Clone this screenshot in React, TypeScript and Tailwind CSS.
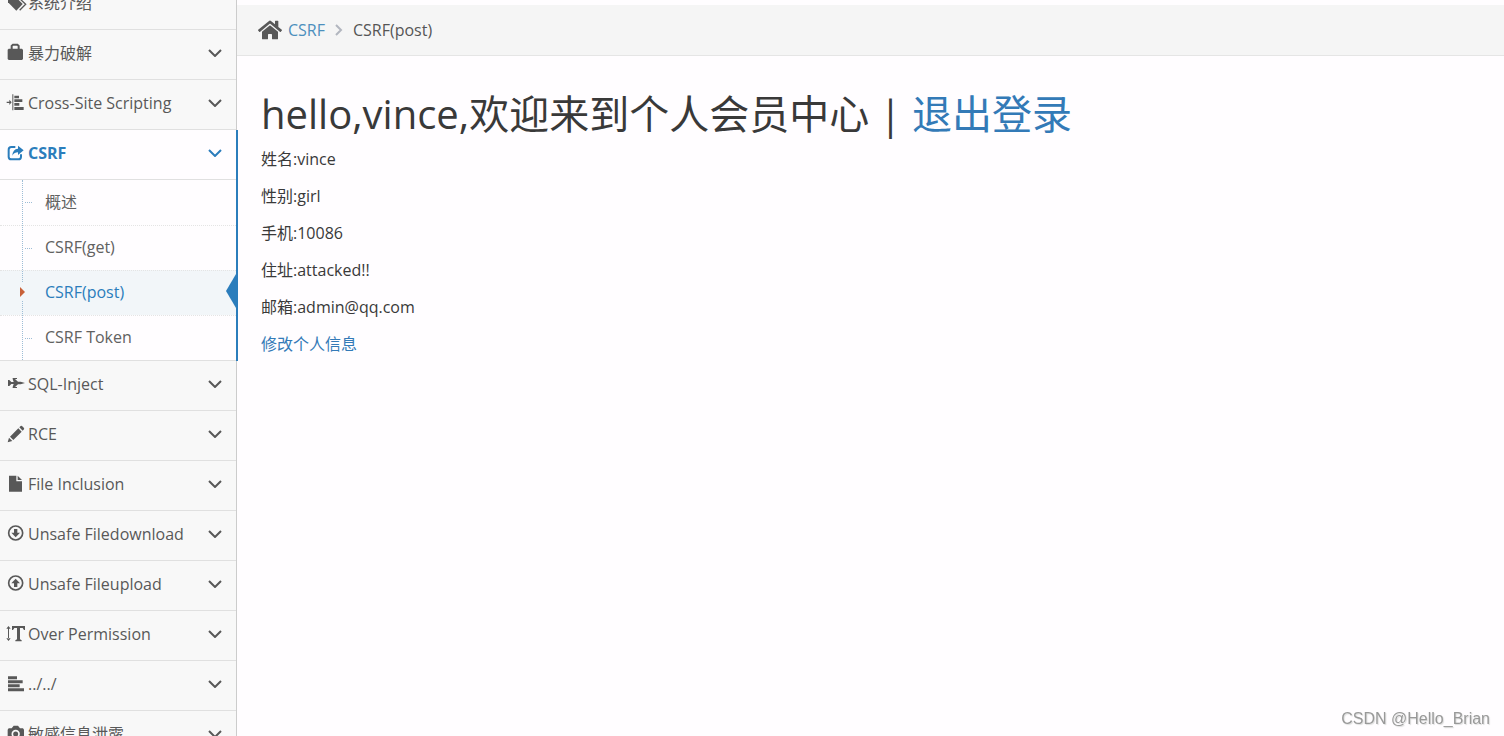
import React, { useState } from 'react';
import { FaHome } from 'react-icons/fa';

const icons: Record<string, React.ReactNode> = {
  tags: (
    <>
      <path d="M6 8h19l25 25-19 20L6 28z" fill="currentColor" />
      <circle cx="14" cy="16" r="4" fill="#f8f8f8" />
      <path d="M32 8l27 26-18 18" fill="none" stroke="currentColor" strokeWidth="4" />
    </>
  ),
  lock: (
    <>
      <path d="M8 17h40l3 3v28l-3 3H8l-3-3V20z" fill="currentColor" />
      <path d="M17 18v-9l4-4h13l4 4v9" fill="none" stroke="currentColor" strokeWidth="6" />
    </>
  ),
  alignObject: (
    <>
      <path d="M19 4h3v48h-3zM25 8h14v8H25zM25 19h24v8H25zM25 30h15v8H25zM25 42h28v9H25z" fill="currentColor" />
      <path d="M2 26h8v-6l7 8-7 8v-6H2z" fill="currentColor" />
    </>
  ),
  share: (
    <>
      <path d="M28 12H16q-8 0-8 8v21q0 8 8 8h21q8 0 8-8v-7" fill="none" stroke="currentColor" strokeWidth="6" />
      <path d="M36 8l17 14-17 14v-8q-11 0-17 10 1-20 17-21z" fill="currentColor" />
    </>
  ),
  plane: (
    <path d="M6 18h4l6 6h7l-3-9v-3h13v3h-6l9 8h8l13 4-13 4h-8l-9 8h6v3H20v-3l3-9h-7l-6 6H6z" fill="currentColor" />
  ),
  pencil: (
    <path d="M5 55l4-14 10 10zM12 38l25-25 10 10-25 25zM40 10l4-4q2-1 4 0l6 6q1 2 0 4l-4 4z" fill="currentColor" />
  ),
  file: <path d="M9 5h22v17h17v31H9zM35 5l13 13H35z" fill="currentColor" />,
  download: (
    <>
      <circle cx="29" cy="27" r="21" fill="none" stroke="currentColor" strokeWidth="5" />
      <path d="M24 15h10v11h8L29 40 16 26h8z" fill="currentColor" />
    </>
  ),
  upload: (
    <>
      <circle cx="29" cy="27" r="21" fill="none" stroke="currentColor" strokeWidth="5" />
      <path d="M24 39h10V28h8L29 14 16 28h8z" fill="currentColor" />
    </>
  ),
  textHeight: (
    <>
      <path d="M18 6h39v12h-3l-4-6h-8v34l5 3v3H28v-3l5-3V12h-8l-4 6h-3z" fill="currentColor" />
      <path d="M6 12h3v32H6zM1 14l6.500-8 6.500 8zM1 43l6.500 8 6.500-8z" fill="currentColor" />
    </>
  ),
  alignLeft: (
    <path d="M6 7h27v9H6zM6 19h44v9H6zM6 31h35v9H6zM6 43h48v9H6z" fill="currentColor" />
  ),
  camera: (
    <>
      <path d="M5 17l3-4h9l6-8h13l6 8h9l3 4v30l-3 3H8l-3-3z" fill="currentColor" />
      <circle cx="29" cy="30" r="10" fill="none" stroke="#f8f8f8" strokeWidth="5" />
    </>
  ),
};

type MenuItem = {
  icon: string;
  label: string;
  plain?: boolean;
  children?: string[];
};

const menu: MenuItem[] = [
  { icon: 'tags', label: '系统介绍', plain: true },
  { icon: 'lock', label: '暴力破解' },
  { icon: 'alignObject', label: 'Cross-Site Scripting' },
  { icon: 'share', label: 'CSRF', children: ['概述', 'CSRF(get)', 'CSRF(post)', 'CSRF Token'] },
  { icon: 'plane', label: 'SQL-Inject' },
  { icon: 'pencil', label: 'RCE' },
  { icon: 'file', label: 'File Inclusion' },
  { icon: 'download', label: 'Unsafe Filedownload' },
  { icon: 'upload', label: 'Unsafe Fileupload' },
  { icon: 'textHeight', label: 'Over Permission' },
  { icon: 'alignLeft', label: '../../' },
  { icon: 'camera', label: '敏感信息泄露' },
];

const profile = [
  ['姓名', 'vince'],
  ['性别', 'girl'],
  ['手机', '10086'],
  ['住址', 'attacked!!'],
  ['邮箱', 'admin@qq.com'],
];

function MenuIcon({ name }: { name: string }) {
  return (
    <svg viewBox="0 0 54 54" className="w-[18px] h-[18px] mb-0.5 mr-1 shrink-0 overflow-visible" aria-hidden="true">
      {icons[name]}
    </svg>
  );
}

function AngleDown() {
  return (
    <svg viewBox="0 0 14 8" className="w-3.5 h-2 ml-auto" fill="none" stroke="currentColor" strokeWidth="2" aria-hidden="true">
      <path d="M1 1l6 6 6-6" />
    </svg>
  );
}

function SubMenu({ items, current, onSelect }: { items: string[]; current: string; onSelect: (s: string) => void }) {
  return (
    <ul className="relative bg-[#fffdff] border-b border-[#e0e0e0]">
      {items.map((item, i) => {
        const active = item === current;
        return (
          <li key={item} className={`relative h-[45px] ${i > 0 ? 'border-t border-dotted border-[#e4e4e4]' : ''} ${active ? 'bg-[#f2f6f9]' : ''}`}>
            {active ? (
              <>
                <span className="absolute left-5 top-3 z-10 py-1 bg-[#f2f6f9]">
                  <span className="block border-y-[5px] border-l-[5px] border-y-transparent border-l-[#c86139]" />
                </span>
                <span className="absolute right-0 top-[3px] border-y-[17px] border-r-[10px] border-y-transparent border-r-[#2b7dbc]" />
              </>
            ) : (
              <span className="absolute left-[25px] top-[22px] w-[7px] border-t border-dotted border-[#9dbdd6]" />
            )}
            <a
              href="#"
              onClick={() => onSelect(item)}
              className={`flex items-center h-full pl-[45px] pb-0.5 ${active ? 'text-[#2b7dbc]' : 'text-[#616161]'}`}
            >
              {item}
            </a>
          </li>
        );
      })}
      <li aria-hidden="true" className="absolute top-0 bottom-0 left-[22px] border-l border-dotted border-[#9dbdd6]" />
    </ul>
  );
}

export default function App() {
  const [open, setOpen] = useState('CSRF');
  const [page, setPage] = useState('CSRF(post)');

  return (
    <div className="flex h-screen overflow-hidden bg-[#fffdff] text-base leading-6 text-[#393939] font-['Open_Sans','Noto_Sans_CJK_SC',sans-serif]">
      <nav className="w-[237px] shrink-0 bg-[#f8f8f8] border-r border-[#ccc]">
        <ul className="-mt-5">
          {menu.map(item => {
            const expanded = item.label === open && !!item.children;
            return (
              <li key={item.label} className="relative">
                <button
                  onClick={() => setOpen(expanded ? '' : item.label)}
                  className={`flex items-center w-full h-[50px] pl-1.5 pr-3.5 pb-[3px] border-b border-[#e0e0e0] ${
                    expanded ? 'bg-[#fffdff] text-[#2b7dbc] font-bold' : 'text-[#585858]'
                  }`}
                >
                  <MenuIcon name={item.icon} />
                  {item.label}
                  {!item.plain && <AngleDown />}
                </button>
                {expanded && item.children && (
                  <>
                    <SubMenu items={item.children} current={page} onSelect={setPage} />
                    <span className="absolute top-0 bottom-0 -right-0.5 w-0.5 bg-[#2b7dbc]" />
                  </>
                )}
              </li>
            );
          })}
        </ul>
      </nav>

      <main className="flex-1 min-w-0">
        <div className="flex items-center h-[51px] mt-[5px] px-[21px] bg-[#f5f5f5] border-b border-[#e5e5e5]">
          <FaHome size={24} className="mr-1.5 text-[#585858]" />
          <a href="#" className="text-[#4c8fbd]">CSRF</a>
          <svg viewBox="0 0 8 12" className="w-2 h-3 mx-2.5" fill="none" stroke="#b2b6bf" strokeWidth="2" aria-hidden="true">
            <path d="M1 1l5 5-5 5" />
          </svg>
          <span className="text-[#555]">{page}</span>
        </div>

        <div className="px-6 pt-8">
          <h1 className="mb-[7px] text-[40px] leading-[52px]">
            hello,vince,欢迎来到个人会员中心 | <a href="#" className="text-[#337ab7]">退出登录</a>
          </h1>
          {profile.map(([label, value]) => (
            <p key={label} className="mb-[13px]">{label}:{value}</p>
          ))}
          <a href="#" className="text-[#337ab7]">修改个人信息</a>
        </div>
      </main>

      <div className="fixed right-3.5 bottom-[5px] text-[#999] font-['Liberation_Sans',sans-serif] [text-shadow:1px_1px_1px_#ddd]">
        CSDN @Hello_Brian
      </div>
    </div>
  );
}
